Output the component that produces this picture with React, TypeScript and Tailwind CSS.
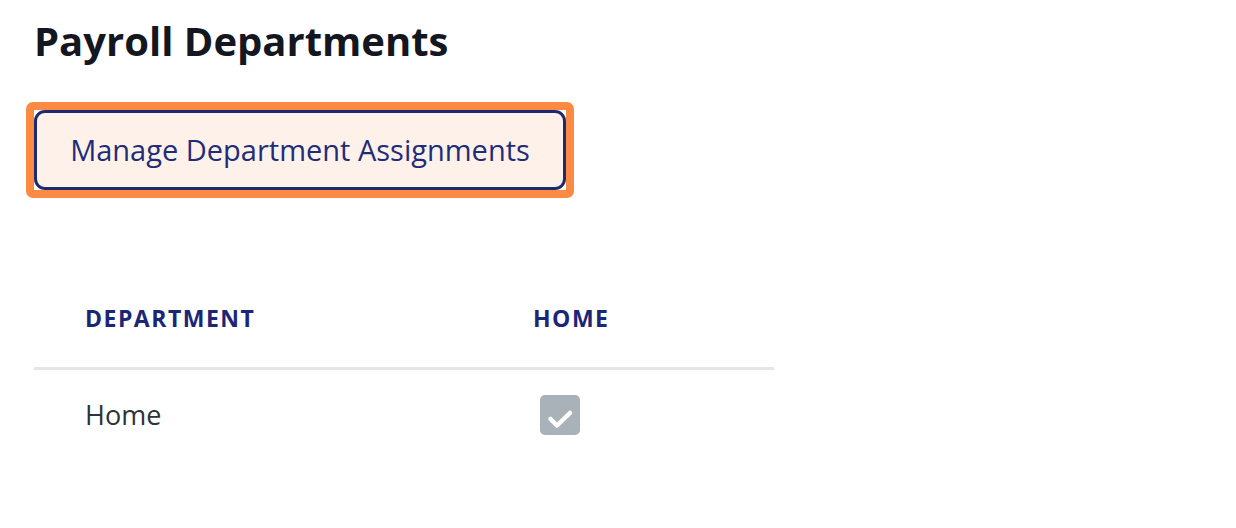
import React from 'react';

const CheckIcon: React.FC = () => (
  <svg viewBox="0 0 40 40" className="w-[40px] h-[40px]">
    <rect x="0" y="0" width="40" height="40" rx="5" fill="#a9b1b9" />
    <path d="M10.5 24 L17 30.5 L30 18" fill="none" stroke="#ffffff" strokeWidth="4.5" strokeLinecap="round" strokeLinejoin="round" />
  </svg>
);

const App: React.FC = () => {
  return (
    <div className="min-h-screen bg-white pl-[34px] pt-[14px] font-['Open_Sans',sans-serif]">
      <h1 className="text-[40px] leading-[54px] font-bold text-[#14171f]">Payroll Departments</h1>

      <div className="mt-[34px] ml-[-8px] inline-block rounded-[7px] border-[8px] border-[#fd8a42] bg-white">
        <button className="block h-[80px] w-[532px] rounded-[11px] border-[3px] border-[#1d2a6f] bg-[#fef1e9] text-[29px] text-[#1f2d78]">
          Manage Department Assignments
        </button>
      </div>

      <table className="mt-[103px] w-[740px] border-collapse">
        <thead>
          <tr className="border-b-[3px] border-[#e5e6e9]">
            <th className="w-[499px] pl-[51px] pt-0 pb-[31px] text-left text-[23px] font-bold tracking-[1.5px] text-[#1b2677]">
              DEPARTMENT
            </th>
            <th className="pb-[31px] text-left text-[23px] font-bold tracking-[1.5px] text-[#1b2677]">HOME</th>
          </tr>
        </thead>
        <tbody>
          <tr>
            <td className="pl-[51px] pt-[25px] pb-[20px] text-[27px] text-[#2f3237]">Home</td>
            <td className="pt-[25px] pb-[20px]">
              <div className="ml-[7px]">
                <CheckIcon />
              </div>
            </td>
          </tr>
        </tbody>
      </table>
    </div>
  );
};

export default App;
